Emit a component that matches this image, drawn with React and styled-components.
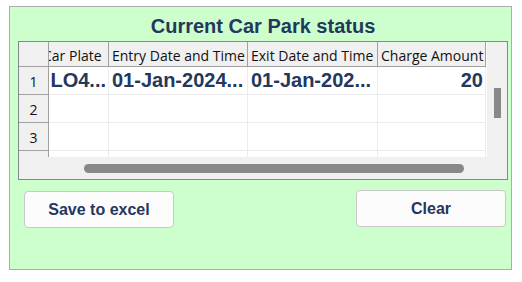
import React from "react";
import styled, { createGlobalStyle } from "styled-components";

const rows = [
  { id: 1, plate: "LO4...", entry: "01-Jan-2024...", exit: "01-Jan-202...", charge: "20" },
  { id: 2 },
  { id: 3 },
  { id: 4 },
];

const columns = [
  { key: "plate", title: "Car Plate", width: 69, align: "right" },
  { key: "entry", title: "Entry Date and Time", width: 139, align: "left" },
  { key: "exit", title: "Exit Date and Time", width: 130, align: "left" },
  { key: "charge", title: "Charge Amount", width: 108, align: "right" },
];

const GlobalStyle = createGlobalStyle`
  body {
    margin: 0;
    background: #ffffff;
    font-family: "Liberation Sans", Arial, sans-serif;
  }
`;

const App = () => {
  return (
    <>
      <GlobalStyle />
      <Panel>
        <Title>Current Car Park status</Title>

        <GridFrame>
          <Viewport>
            <RowHeaders>
              <Corner />
              {rows.map((row) => (
                <RowNumber key={row.id}>{row.id < 4 ? row.id : ""}</RowNumber>
              ))}
            </RowHeaders>

            {/* grid is scrolled a little to the right, so the first column is clipped */}
            <DataPane>
              <Scroller $offset={9}>
                <HeaderRow>
                  {columns.map((col) => (
                    <HeaderCell key={col.key} $width={col.width}>
                      {col.title}
                    </HeaderCell>
                  ))}
                </HeaderRow>
                {rows.map((row) => (
                  <DataRow key={row.id}>
                    {columns.map((col) => (
                      <DataCell key={col.key} $width={col.width} $align={col.align}>
                        {row[col.key]}
                      </DataCell>
                    ))}
                  </DataRow>
                ))}
              </Scroller>
            </DataPane>

            <VTrack>
              <VThumb />
            </VTrack>
          </Viewport>

          <HTrack>
            <HThumb />
          </HTrack>
        </GridFrame>

        <ButtonRow>
          <Button $shift={1}>Save to excel</Button>
          <Button>Clear</Button>
        </ButtonRow>
      </Panel>
    </>
  );
};

const Panel = styled.div`
  box-sizing: border-box;
  width: 503px;
  height: 264px;
  margin: 6px 0 0 9px;
  padding: 7px 3px 0 8px;
  background: #ccffcc;
  border: 1px solid #acacac;
  display: flex;
  flex-direction: column;
`;

const Title = styled.div`
  font-size: 20px;
  line-height: 24px;
  font-weight: 700;
  color: #24375c;
  text-align: center;
  margin-bottom: 3px;
`;

const GridFrame = styled.div`
  box-sizing: border-box;
  width: 490px;
  height: 139px;
  border: 1px solid #828790;
  background: #f0f0f0;
  display: flex;
  flex-direction: column;
`;

const Viewport = styled.div`
  display: flex;
  height: 115px;
  overflow: hidden;
`;

const RowHeaders = styled.div`
  box-sizing: border-box;
  width: 30px;
  flex: none;
  border-right: 1px solid #a0a0a0;
  display: flex;
  flex-direction: column;
`;

const Corner = styled.div`
  box-sizing: border-box;
  height: 25px;
  flex: none;
  border-bottom: 1px solid #a0a0a0;
`;

const RowNumber = styled.div`
  box-sizing: border-box;
  height: 28px;
  flex: none;
  padding-top: 3px;
  border-bottom: 1px solid #a0a0a0;
  font-family: "Open Sans", sans-serif;
  font-size: 14px;
  line-height: 24px;
  color: #111;
  text-align: center;
`;

const DataPane = styled.div`
  width: 438px;
  flex: none;
  overflow: hidden;
  background: #ffffff;
`;

const Scroller = styled.div`
  margin-left: ${(p) => -p.$offset}px;
  width: max-content;
`;

const HeaderRow = styled.div`
  display: flex;
  background: #f0f0f0;
`;

const HeaderCell = styled.div`
  box-sizing: border-box;
  width: ${(p) => p.$width}px;
  height: 25px;
  padding: 3px 3px 0;
  border-right: 1px solid #a0a0a0;
  border-bottom: 1px solid #a0a0a0;
  font-family: "Open Sans", sans-serif;
  font-size: 14px;
  line-height: 21px;
  color: #111;
  white-space: nowrap;
  overflow: hidden;
`;

const DataRow = styled.div`
  display: flex;
`;

const DataCell = styled.div`
  box-sizing: border-box;
  width: ${(p) => p.$width}px;
  height: 28px;
  padding: 0 2px 0 3px;
  border-right: 1px solid #ececec;
  border-bottom: 1px solid #ececec;
  font-size: 20px;
  font-weight: 700;
  line-height: 27px;
  color: #24375c;
  text-align: ${(p) => p.$align};
  white-space: nowrap;
  overflow: hidden;
`;

const VTrack = styled.div`
  flex: 1;
  display: flex;
  justify-content: center;
  padding: 46px 0 0 1px;
`;

const VThumb = styled.div`
  width: 7px;
  height: 30px;
  background: #888888;
`;

const HTrack = styled.div`
  flex: 1;
  padding: 7px 0 0 65px;
`;

const HThumb = styled.div`
  width: 380px;
  height: 9px;
  border-radius: 5px;
  background: #888888;
`;

const ButtonRow = styled.div`
  display: flex;
  justify-content: space-between;
  align-items: flex-start;
  width: 490px;
  box-sizing: border-box;
  padding: 0 2px 0 6px;
  margin-top: 10px;
`;

const Button = styled.button`
  box-sizing: border-box;
  width: 150px;
  height: 37px;
  margin-top: ${(p) => p.$shift || 0}px;
  padding: 0;
  background: #fcfcfc;
  border: 1px solid #c8c8c8;
  border-radius: 4px;
  font-family: "Liberation Sans", Arial, sans-serif;
  font-size: 16px;
  font-weight: 700;
  color: #24375c;
  cursor: pointer;
`;

export default App;
